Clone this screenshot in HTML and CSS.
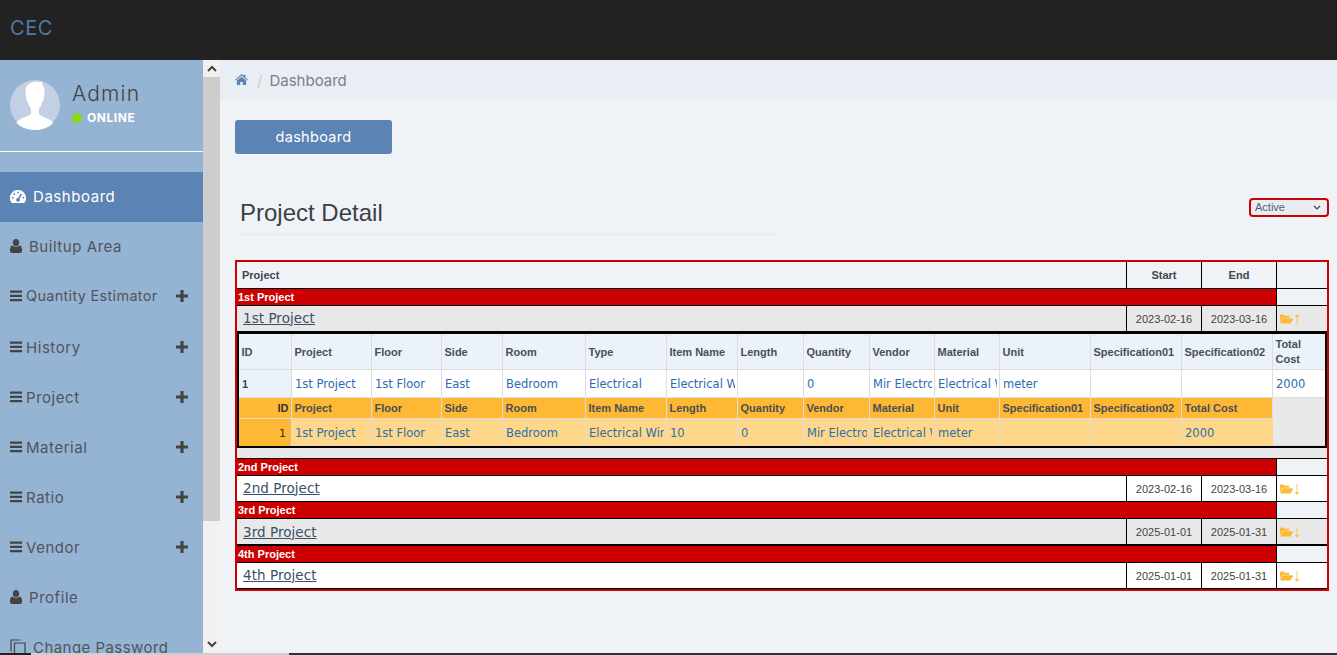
FILE: index.html
```html
<!DOCTYPE html>
<html lang="en">
<head>
<meta charset="utf-8">
<title>CEC</title>
<link rel="stylesheet" href="styles.css">
</head>
<body>
<svg class="sprites" width="0" height="0" aria-hidden="true">
  <symbol id="i-bars" viewBox="0 0 14 12"><path d="M0 0h13v2.4H0zM0 4.6h13V7H0zM0 9.2h13v2.4H0z"/></symbol>
  <symbol id="i-plus" viewBox="0 0 12 12"><path d="M4.4 0h3.2v4.4H12v3.2H7.600V12H4.400V7.600H0V4.400h4.400z"/></symbol>
  <symbol id="i-user" viewBox="0 0 12 14"><path d="M6 0c1.900 0 3.200 1.600 3.200 3.500S7.900 7.200 6 7.200 2.800 5.400 2.800 3.500 4.100 0 6 0zM2.700 6.600C3.500 7.500 4.700 8 6 8s2.500-.5 3.300-1.400c1.600.2 2.700 1.500 2.700 3.900v1.500c0 1.100-.8 2-1.900 2H1.900C.8 14 0 13.100 0 12v-1.500c0-2.400 1.100-3.700 2.700-3.900z"/></symbol>
  <symbol id="i-folder" viewBox="0 0 19 14"><path d="M0 12V2c0-.9.700-1.600 1.600-1.600h3.300c.9 0 1.300.6 1.600 1.200l.3.500h5.400c.9 0 1.500.6 1.500 1.500V5H4.800c-1 0-1.700.5-2.200 1.400L0 12z"/><path d="M4.700 6h13c.9 0 1.500.9 1 1.700l-2.800 5c-.3.500-.8.800-1.400.8H1.200c-.6 0-.9-.6-.6-1.100l2.900-5.600C3.700 6.300 4.200 6 4.700 6z"/></symbol>
  <symbol id="i-up" viewBox="0 0 6 12"><path d="M3 0l2.700 3.400H3.500V12h-1V3.400H.3z"/></symbol>
  <symbol id="i-down" viewBox="0 0 6 12"><path d="M3 12L.3 8.600h2.200V0h1v8.600h2.200z"/></symbol>
</svg>

<header class="topbar"><span class="brand">CEC</span></header>

<div class="shell">
  <aside class="sidebar">
    <div class="user">
      <svg class="avatar" viewBox="0 0 50 50" aria-hidden="true">
        <circle cx="25" cy="25" r="25" fill="#c3cfe2"/>
        <path fill="#fff" d="M33 3c-2.500-1-6-1.500-9-1-5 .6-8.500 3.600-8.500 9.500 0 3 .5 5.500 1 7.500 0 1.500.8 2.500 1.500 3.500.8 2.800 1.800 5 3 6.200v4.800c-1 2.200-7 3.400-10.500 5.500C8.500 39.800 7.600 41 6.500 43c4.500 4.500 11.500 7 18.500 7s13.500-2.400 18-6.800c-1-2.100-2.200-3.500-4.500-4.300-3.500-1.300-9-3.200-9.500-5.400V28.700c1.300-1.300 2.300-3.400 3-6.200 1-1 1.700-2.300 1.700-3.800.6-2.200 1-4.700.8-7.400-.2-3-1.300-6-2.500-7.300z"/>
      </svg>
      <div class="user-info">
        <div class="user-name">Admin</div>
        <div class="user-status"><span class="dot"></span>ONLINE</div>
      </div>
    </div>
    <nav class="menu">
      <a class="item active lift">
        <svg class="ico-gauge" viewBox="0 0 16 13" aria-hidden="true"><path fill="#fff" d="M8 0a8 8 0 0 1 8 8c0 1.700-.5 3.300-1.400 4.600-.2.300-.5.400-.8.400H2.200c-.3 0-.6-.1-.8-.4A8 8 0 0 1 8 0z"/><path fill="#5b83b3" d="M7.200 1.700h1.600v1.600H7.200zM3.500 3.300h1.600v1.600H3.500zM1.900 7h1.600v1.600H1.900zM12.500 7h1.600v1.600h-1.600zM10.800 3.500l1.300.8-2.600 4.500a1.800 1.800 0 1 1-1.400-.7z"/></svg>
        <span class="gap-dash">Dashboard</span>
      </a>
      <a class="item lift"><svg class="ico-user"><use href="#i-user"/></svg><span class="gap-user">Builtup Area</span></a>
      <a class="item lift-more"><svg class="ico-bars"><use href="#i-bars"/></svg><span class="gap-qty">Quantity Estimator</span><svg class="ico-plus"><use href="#i-plus"/></svg></a>
      <a class="item"><svg class="ico-bars"><use href="#i-bars"/></svg><span>History</span><svg class="ico-plus"><use href="#i-plus"/></svg></a>
      <a class="item"><svg class="ico-bars"><use href="#i-bars"/></svg><span>Project</span><svg class="ico-plus"><use href="#i-plus"/></svg></a>
      <a class="item"><svg class="ico-bars"><use href="#i-bars"/></svg><span>Material</span><svg class="ico-plus"><use href="#i-plus"/></svg></a>
      <a class="item"><svg class="ico-bars"><use href="#i-bars"/></svg><span>Ratio</span><svg class="ico-plus"><use href="#i-plus"/></svg></a>
      <a class="item"><svg class="ico-bars"><use href="#i-bars"/></svg><span>Vendor</span><svg class="ico-plus"><use href="#i-plus"/></svg></a>
      <a class="item"><svg class="ico-user"><use href="#i-user"/></svg><span class="gap-user">Profile</span></a>
      <a class="item">
        <svg class="ico-copy" viewBox="0 0 16 17" aria-hidden="true"><path fill="none" stroke="#444" stroke-width="1.200" d="M10.500 1H1v11.500M4.500 4H15v13H4.500z"/></svg>
        <span class="gap-pass">Change Password</span>
      </a>
    </nav>
  </aside>

  <div class="scrollbar" aria-hidden="true">
    <div class="sb-btn"><svg viewBox="0 0 10 7"><path fill="none" stroke="#444" stroke-width="2" d="M1 6l4-4 4 4"/></svg></div>
    <div class="sb-thumb"></div>
    <div class="sb-track"></div>
    <div class="sb-btn"><svg viewBox="0 0 10 7"><path fill="none" stroke="#444" stroke-width="2" d="M1 1l4 4 4-4"/></svg></div>
  </div>

  <main class="content">
    <div class="crumbs">
      <svg class="ico-home" viewBox="0 0 14 12" aria-hidden="true"><path fill="#5b83b3" d="M7 0l2.300 2V.8h1.900v2.900L14 6.200l-.8.800L7 1.700.8 7 0 6.200zM2 7.200l5-4.300 5 4.300V12H8.400V8.600H5.600V12H2z"/></svg>
      <span class="sep">/</span>
      <span class="crumb">Dashboard</span>
    </div>

    <div class="page">
      <a class="btn">dashboard</a>

      <div class="title-row">
        <h1 class="title">Project Detail</h1>
        <div class="select"><span>Active</span><svg viewBox="0 0 8 5" aria-hidden="true"><path fill="none" stroke="#444" stroke-width="1.200" d="M1 1l3 3 3-3"/></svg></div>
      </div>

      <table class="projects">
        <colgroup><col class="c-name"><col class="c-date"><col class="c-date"><col class="c-act"></colgroup>
        <tr class="r-head"><th class="left">Project</th><th>Start</th><th>End</th><th></th></tr>

        <tr class="r-band"><td colspan="3">1st Project</td><td class="blank"></td></tr>
        <tr class="r-row grey"><td><a class="plink">1st Project</a></td><td class="date">2023-02-16</td><td class="date">2023-03-16</td><td class="act"><svg class="ico-folder"><use href="#i-folder"/></svg><svg class="ico-arrow"><use href="#i-up"/></svg></td></tr>
        <tr class="r-detail"><td colspan="4">
          <table class="detail">
            <colgroup>
              <col class="d1"><col class="d2"><col class="d3"><col class="d4"><col class="d5"><col class="d6"><col class="d7"><col class="d8"><col class="d9"><col class="d10"><col class="d11"><col class="d12"><col class="d13"><col class="d14"><col class="d15">
            </colgroup>
            <tr class="dh">
              <th class="idh">ID</th><th>Project</th><th>Floor</th><th>Side</th><th>Room</th><th>Type</th><th>Item Name</th><th>Length</th><th>Quantity</th><th>Vendor</th><th>Material</th><th>Unit</th><th>Specification01</th><th>Specification02</th><th class="wrap">Total Cost</th>
            </tr>
            <tr class="db">
              <th class="idb">1</th><td><div>1st Project</div></td><td><div>1st Floor</div></td><td><div>East</div></td><td><div>Bedroom</div></td><td><div>Electrical</div></td><td><div>Electrical Wire</div></td><td></td><td><div>0</div></td><td><div>Mir Electronics</div></td><td><div>Electrical Wire</div></td><td><div>meter</div></td><td></td><td></td><td><div>2000</div></td>
            </tr>
            <tr class="oh">
              <th class="ido">ID</th><th>Project</th><th>Floor</th><th>Side</th><th>Room</th><th>Item Name</th><th>Length</th><th>Quantity</th><th>Vendor</th><th>Material</th><th>Unit</th><th>Specification01</th><th>Specification02</th><th>Total Cost</th><td class="rest" rowspan="2"></td>
            </tr>
            <tr class="ob">
              <td class="ido">1</td><td><div>1st Project</div></td><td><div>1st Floor</div></td><td><div>East</div></td><td><div>Bedroom</div></td><td><div>Electrical Wire</div></td><td><div>10</div></td><td><div>0</div></td><td><div>Mir Electronics</div></td><td><div>Electrical Wire</div></td><td><div>meter</div></td><td></td><td></td><td><div>2000</div></td>
            </tr>
          </table>
        </td></tr>

        <tr class="r-band"><td colspan="3">2nd Project</td><td class="blank"></td></tr>
        <tr class="r-row"><td><a class="plink">2nd Project</a></td><td class="date">2023-02-16</td><td class="date">2023-03-16</td><td class="act"><svg class="ico-folder"><use href="#i-folder"/></svg><svg class="ico-arrow"><use href="#i-down"/></svg></td></tr>

        <tr class="r-band"><td colspan="3">3rd Project</td><td class="blank"></td></tr>
        <tr class="r-row grey thick"><td><a class="plink">3rd Project</a></td><td class="date">2025-01-01</td><td class="date">2025-01-31</td><td class="act"><svg class="ico-folder"><use href="#i-folder"/></svg><svg class="ico-arrow"><use href="#i-down"/></svg></td></tr>

        <tr class="r-band"><td colspan="3">4th Project</td><td class="blank"></td></tr>
        <tr class="r-row"><td><a class="plink">4th Project</a></td><td class="date">2025-01-01</td><td class="date">2025-01-31</td><td class="act"><svg class="ico-folder"><use href="#i-folder"/></svg><svg class="ico-arrow"><use href="#i-down"/></svg></td></tr>
      </table>
    </div>
  </main>
</div>

<div class="bottom-strip" aria-hidden="true"><span class="s1"></span><span class="s2"></span><span class="s3"></span></div>
</body>
</html>
```

FILE: styles.css
```css
* { box-sizing: border-box; }
html, body { margin: 0; padding: 0; height: 100%; overflow: hidden; }
body {
  width: 1337px; height: 655px; position: relative;
  font-family: "Inter", "Open Sans", sans-serif;
  background: #eff3f7; color: #444;
}
.sprites { position: absolute; }

/* top bar */
.topbar { height: 60px; background: #222; display: flex; align-items: center; padding: 0 0 4px 10px; }
.brand { font-size: 20px; color: #4f77a8; letter-spacing: .6px; }

.shell { display: flex; height: 595px; }

/* sidebar */
.sidebar { width: 203px; flex: none; background: #95b3d3; overflow: hidden; height: 593px; }
.user { height: 92px; padding: 20px 0 0 10px; display: flex; border-bottom: 1px solid #fff; }
.avatar { width: 50px; height: 50px; flex: none; }
.user-info { margin-left: 12px; }
.user-name { font-size: 21px; line-height: 28px; color: #444; letter-spacing: 1.200px; font-weight: 300; }
.user-status { display: flex; align-items: center; font-size: 12px; font-weight: 700; color: #fff; line-height: 16px; margin-top: 2px; letter-spacing: .55px; }
.dot { width: 10px; height: 10px; flex: none; border-radius: 50%; background: #87dc0f; margin-right: 5px; }

.menu { padding-top: 20px; }
.item { height: 50px; display: flex; align-items: center; padding-left: 10px; font-size: 15px; color: #50555c; letter-spacing: .55px; position: relative; }
.item.lift { padding-bottom: 2px; }
.item.lift-more { padding-bottom: 3px; }
.item.active { background: #5b83b3; color: #fff; }
.item svg { fill: #444; flex: none; }
.ico-gauge { width: 16px; height: 13px; }
.ico-user { width: 12px; height: 14px; }
.ico-bars { width: 13px; height: 12px; }
.ico-plus { width: 12px; height: 12px; position: absolute; left: 176px; }
.ico-copy { width: 16px; height: 17px; }
.item > span { margin-left: 3px; }
.item > span.gap-dash { margin-left: 7px; }
.item > span.gap-user { margin-left: 7px; }
.item > span.gap-qty { margin-left: 3px; font-size: 14.500px; letter-spacing: .3px; }
.item > span.gap-pass { margin-left: 7px; letter-spacing: .45px; }

/* sidebar scrollbar */
.scrollbar { width: 17px; flex: none; display: flex; flex-direction: column; background: #f1f1f1; height: 593px; }
.sb-btn { height: 17px; flex: none; display: flex; align-items: center; justify-content: center; background: #f1f1f1; }
.sb-btn svg { width: 10px; height: 7px; }
.sb-thumb { height: 444px; background: #cdcdcd; flex: none; }
.sb-track { flex: 1; }

/* content */
.content { flex: 1; min-width: 0; }
.crumbs { height: 40px; background: #e9edf4; padding-left: 15px; display: flex; align-items: center; font-size: 15px; }
.ico-home { width: 13px; height: 11px; margin-top: -1px; }
.sep { color: #c8ccd2; margin: 0 7px 0 9px; }
.crumb { color: #7a8087; letter-spacing: 0; }

.page { padding: 20px 8px 0 15px; }
.btn { display: flex; align-items: center; justify-content: center; width: 157px; height: 34px; padding-bottom: 2px; background: #5b83b3; color: #fff; border-radius: 3px; font-size: 14.500px; letter-spacing: .3px; }

.title-row { display: flex; justify-content: space-between; height: 106px; padding-top: 44px; }
.title { margin: 0 0 0 5px; width: 536px; height: 37px; border-bottom: 1px solid #e6e9ee; font: 400 24px/30px "Liberation Sans", sans-serif; color: #3b3f44; }
.select { width: 80px; height: 19px; border: 2px solid #c00; border-radius: 4px; background: #e9ecf1; display: flex; align-items: center; justify-content: space-between; padding: 0 6px 1px 4px; font: 11px "Liberation Sans", sans-serif; color: #4f6178; }
.select svg { width: 8px; height: 5px; }

/* outer table */
.projects { border: 2px solid #c00; border-collapse: separate; border-spacing: 0; table-layout: fixed; width: 1094px; font-family: "Liberation Sans", sans-serif; }
.c-name { width: 889px; }
.c-date { width: 75px; }
.c-act { width: 51px; }
.projects > tbody > tr > th, .projects > tbody > tr > td { padding: 0; }
.r-head > th { height: 27px; font-size: 11px; font-weight: 700; color: #3f4650; text-align: center; border-bottom: 1px solid #000; border-left: 1px solid #000; }
.r-head > th.left { text-align: left; padding-left: 5px !important; border-left: 0; }
.r-band > td { height: 17px; background: #c00; color: #fff; font-size: 11px; font-weight: 700; padding-left: 1px !important; border-bottom: 1px solid #000; line-height: 16px; }
.r-band > td.blank { background: #eff3f7; border-left: 1px solid #000; }
.r-row > td { height: 26px; background: #fff; border-bottom: 1px solid #000; border-left: 1px solid #000; }
.r-row.grey > td { background: #e8e8e8; }
.r-row.thick > td { height: 27px; border-bottom-width: 2px; }
.r-row > td:first-child { border-left: 0; padding-left: 6px !important; }
.plink { font-family: "DejaVu Sans", sans-serif; font-size: 13.500px; letter-spacing: .05px; line-height: 16px; color: #3a5068; text-decoration: underline; position: relative; top: -1px; }
.thick .plink { top: 0; }
.date { font-size: 11px; text-align: center; color: #444; }
.act { padding-left: 3px !important; white-space: nowrap; }
.ico-folder { width: 13px; height: 10px; fill: #fdb933; vertical-align: middle; }
.ico-arrow { width: 6px; height: 11px; margin-left: 1px; fill: #fdc25a; vertical-align: middle; }

.r-detail > td { background: #e8e8e8; padding: 0 0 10px 0 !important; border-bottom: 1px solid #000; }
.detail { border: 2px solid #000; border-top-width: 3px; border-collapse: separate; border-spacing: 0; table-layout: fixed; width: 1090px; margin-top: -1px; }
.d1 { width: 53px; } .d2 { width: 80px; } .d3 { width: 70px; } .d4 { width: 61px; } .d5 { width: 83px; }
.d6 { width: 81px; } .d7 { width: 71px; } .d8 { width: 66px; } .d9 { width: 66px; } .d10 { width: 65px; }
.d11 { width: 65px; } .d12 { width: 91px; } .d13 { width: 91px; } .d14 { width: 91px; } .d15 { width: 52px; }
.detail th, .detail td { border-right: 1px solid #ddd; border-bottom: 1px solid #ddd; font-size: 11px; white-space: nowrap; overflow: hidden; }
.detail th { padding: 0 2.500px; }
.detail td { padding: 1px 2px 0 3px; }
.detail tr > :last-child { border-right: 0; }
.detail tr:last-child > * { border-bottom: 0; }
.detail th { font-weight: 700; text-align: left; color: #4a4f55; font-family: "Liberation Sans", sans-serif; }
.detail td { font-family: "DejaVu Sans", sans-serif; font-size: 11.500px; }
.detail td div { overflow: hidden; white-space: nowrap; }
.dh > th { height: 36px; background: #ebf2f9; }
.dh > th.wrap { white-space: normal; line-height: 15px; }
.db > * { height: 28px; background: #fff; color: #2a6cb0; }
.db > th.idb { background: #ebf2f9; color: #3f4650; font-size: 11px; padding-left: 3px; }
.oh > th { height: 21px; background: #feb833; }
.ob > td { height: 27px; background: #fed78a; color: #2f6fa8; }
.detail .ido { background: #feb833; text-align: right; color: #333; }
.ob > .ido { font-family: "DejaVu Sans", sans-serif; font-size: 11px; padding-right: 5px; }
.detail .rest { background: #e8e8e8; }

/* bottom strip */
.bottom-strip { position: absolute; left: 0; right: 0; bottom: 0; height: 2px; display: flex; }
.s1 { width: 31px; background: #222; }
.s2 { width: 258px; background: #cfcfcf; }
.s3 { flex: 1; background: #333; }
```
